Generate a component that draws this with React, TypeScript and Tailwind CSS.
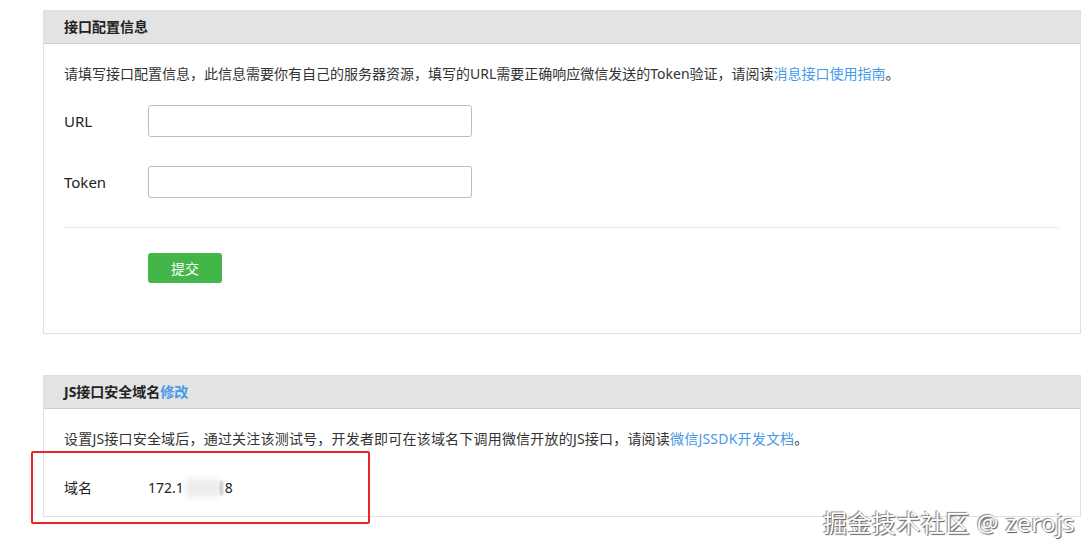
import React from "react";

const font = { fontFamily: '"Noto Sans", "Noto Sans CJK SC", sans-serif' };

function Panel({ title, children, className = "" }: { title: React.ReactNode; children: React.ReactNode; className?: string }) {
    return (
        <div className={`relative border border-[#e0e0e0] bg-white ${className}`}>
            <div className="h-[33px] flex items-center px-5 pb-[1px] bg-[#e3e3e3] border-b border-[#cfcfcf] text-[14px] font-bold text-[#222]">
                {title}
            </div>
            {children}
        </div>
    );
}

function Field({ label }: { label: string }) {
    return (
        <div className="flex items-center">
            <span className="w-[84px] text-[15px] text-[#222]">{label}</span>
            <input className="w-[324px] h-[32px] border border-[#bdbdbd] rounded-[3px] px-2 outline-none" />
        </div>
    );
}

export default function App() {
    return (
        <div className="relative w-[1092px] h-[555px] bg-white pt-[10px] pl-[43px] overflow-hidden" style={font}>
            <Panel title="接口配置信息" className="w-[1038px] h-[324px]">
                <div className="px-5">
                    <p className="mt-5 text-[14px] leading-5 text-[#333]">
                        请填写接口配置信息，此信息需要你有自己的服务器资源，填写的URL需要正确响应微信发送的Token验证，请阅读
                        <a className="text-[#459ae9]">消息接口使用指南</a>。
                    </p>
                    <div className="mt-[21px] flex flex-col gap-[29px]">
                        <Field label="URL" />
                        <Field label="Token" />
                    </div>
                    <div className="mt-[29px] border-t border-[#e8e8e8] mr-[1px]" />
                    <button className="mt-[25px] ml-[84px] w-[74px] h-[30px] rounded-[3px] bg-[#44b549] text-white text-[14px]">
                        提交
                    </button>
                </div>
            </Panel>

            <Panel
                title={<span>JS接口安全域名<a className="text-[#459ae9] font-bold">修改</a></span>}
                className="w-[1038px] h-[142px] mt-[41px]"
            >
                <div className="px-5">
                    <p className="mt-5 text-[14px] leading-5 text-[#333] tracking-[0.2px]">
                        设置JS接口安全域后，通过关注该测试号，开发者即可在该域名下调用微信开放的JS接口，请阅读
                        <a className="text-[#459ae9]">微信JSSDK开发文档</a>。
                    </p>
                    <div className="mt-[28px] flex items-center text-[14px] text-[#222]">
                        <span className="w-[84px]">域名</span>
                        <span>172.1</span>
                        <span className="inline-block w-[34px] h-[18px] bg-[#ececec] blur-[3px] ml-[2px]" />
                        <span className="inline-block w-[3px] h-[14px] bg-[#c4c4c4] blur-[1px] mr-[2px]" />
                        <span>8</span>
                    </div>
                </div>
                <div className="absolute left-[-13px] top-[75px] w-[339px] h-[73px] border-2 border-[#e8232b] rounded-[2px]" />
            </Panel>

            <div
                className="absolute right-[17px] bottom-[20px] text-[24px] leading-none text-white tracking-[0.5px]"
                style={{ textShadow: "1px 1px 1px #555, -1px -1px 1px #888" }}
            >
                掘金技术社区 @ zerojs
            </div>
        </div>
    );
}
